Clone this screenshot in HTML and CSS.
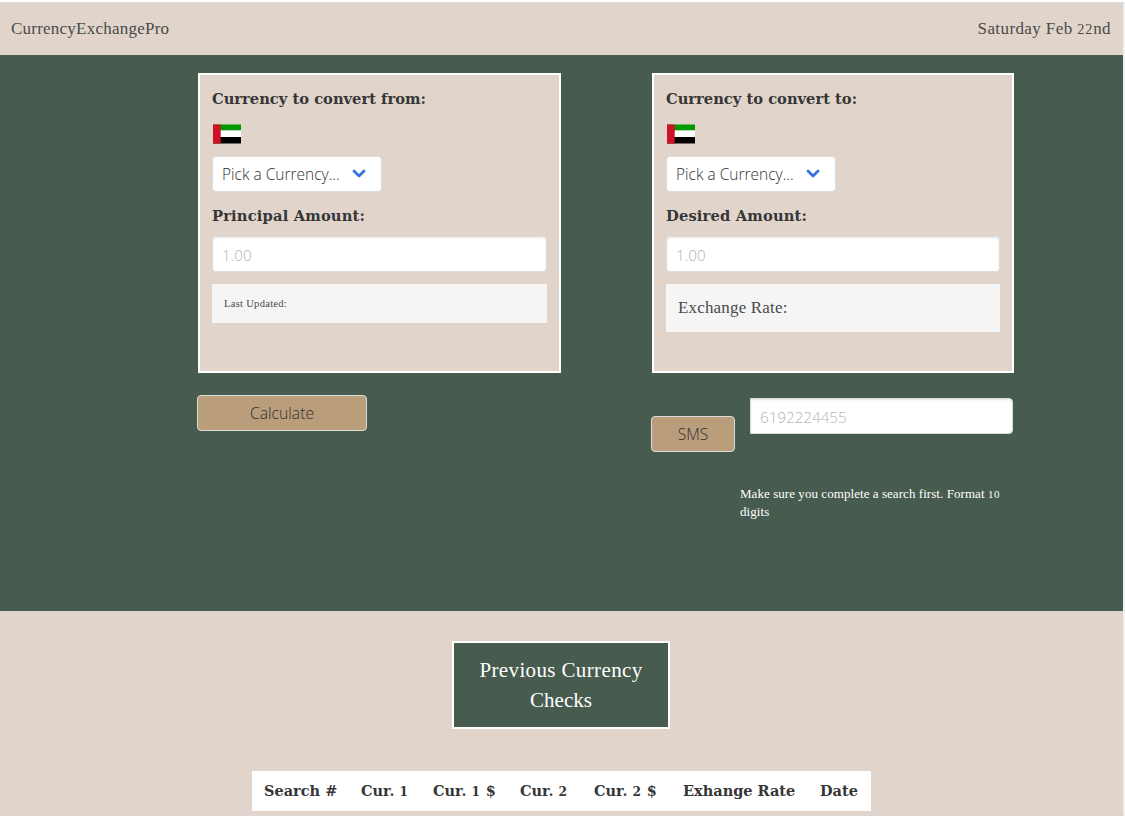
FILE: index.html
```html
<!DOCTYPE html>
<html lang="en">
<head>
<meta charset="utf-8">
<title>CurrencyExchangePro</title>
<link rel="stylesheet" href="styles.css">
</head>
<body>
<div class="page">
<header class="navbar"><span class="brand">CurrencyExchangePro</span><span class="today">Saturday Feb <span class="onum">22</span>nd</span></header>
<main class="converter">
  <section class="column">
    <div class="panel">
      <h2 class="label"><span class="from">Currency to convert from:</span></h2>
      <svg class="flag" viewBox="0 0 28 20"><path fill="#009a00" d="M0 .5h28v6H0z"/><path fill="#fff" d="M0 6.5h28v6.5H0z"/><path fill="#000" d="M0 13h28v6.5H0z"/><path fill="#cf1126" d="M0 .5h7.7v19H0z"/></svg>
      <div class="select"><span>Pick a Currency...</span><svg viewBox="0 0 14 10"><path d="M2 2l5 5 5-5"/></svg></div>
      <h2 class="label second"><span class="principal">Principal Amount:</span></h2>
      <input class="input" placeholder="1.00">
      <div class="result small"><span>Last Updated:</span></div>
    </div>
    <button class="button calculate">Calculate</button>
  </section>
  <section class="column">
    <div class="panel">
      <h2 class="label"><span class="to">Currency to convert to:</span></h2>
      <svg class="flag" viewBox="0 0 28 20"><path fill="#009a00" d="M0 .5h28v6H0z"/><path fill="#fff" d="M0 6.5h28v6.5H0z"/><path fill="#000" d="M0 13h28v6.5H0z"/><path fill="#cf1126" d="M0 .5h7.7v19H0z"/></svg>
      <div class="select"><span>Pick a Currency...</span><svg viewBox="0 0 14 10"><path d="M2 2l5 5 5-5"/></svg></div>
      <h2 class="label second"><span class="desired">Desired Amount:</span></h2>
      <input class="input" placeholder="1.00">
      <div class="result"><span>Exchange Rate:</span></div>
    </div>
    <div class="sms-row">
      <button class="button sms">SMS</button>
      <input class="input phone" placeholder="6192224455">
    </div>
    <p class="note"><span>Make sure you complete a search first. Format <span class="onum">10</span></span><br><span class="digits">digits</span></p>
  </section>
</main>
<section class="history">
  <h1 class="title"><span class="wide">Previous Currency</span><br><span>Checks</span></h1>
  <table class="checks">
    <tr><th class="c1">Search #</th><th class="c2">Cur. <span class="onum">1</span></th><th class="c3">Cur. <span class="onum">1</span> $</th><th class="c4">Cur. <span class="onum">2</span></th><th class="c5">Cur. <span class="onum">2</span> $</th><th class="c6">Exhange Rate</th><th class="c7">Date</th></tr>
  </table>
</section>
</div>
</body>
</html>
```
FILE: styles.css
```css
* { box-sizing: border-box; }
body { margin: 0; height: 818px; overflow: hidden; background: #fff; padding-top: 2px; color: #4a4a4a; font: 17px/24px "Liberation Serif", serif; }
.page { height: 814px; border-top: 1px solid #dcdcdc; border-bottom: 1px solid #dbd7d6; border-right: 2px solid #f1f1f1; background: #e1d5cb; }
.navbar { height: 52px; padding: 0 12px 0 11px; display: flex; justify-content: space-between; align-items: center; }
.brand { letter-spacing: .23px; }
.today { letter-spacing: .4px; }
.onum { font-size: .84em; line-height: 1; letter-spacing: .06em; }
.converter { height: 556px; background: #475b4f; padding: 18px 0 0 198px; display: grid; grid-template-columns: 363px 362px; column-gap: 91px; align-content: start; }
.panel { height: 300px; border: 2px solid #fff; background: #e1d5cb; padding: 12px; display: flex; flex-direction: column; align-items: flex-start; }
.label { margin: 0; height: 24px; font: bold 14.7px/23px "DejaVu Serif", serif; color: #363636; white-space: nowrap; }
.principal, .desired { letter-spacing: .16px; }
.second { margin: 12px 0 8px; }
.flag { width: 28px; height: 20px; margin: 13px 0 12px 1px; }
.select { width: 170px; height: 36px; background: #fff; border: 1px solid #dbdbdb; border-radius: 4px; display: flex; align-items: center; justify-content: space-between; padding: 0 15px 0 9px; font: 300 15.5px "Open Sans", sans-serif; color: #303030; }
.select svg { width: 14px; height: 10px; fill: none; stroke: #3273dc; stroke-width: 2.8; stroke-linecap: round; stroke-linejoin: round; }
.input { display: block; width: 100%; height: 36px; border: 1px solid #dbdbdb; border-radius: 4px; box-shadow: inset 0 1px 2px rgba(10,10,10,.1); padding: 2px 9px 0; font: 300 15.2px "Open Sans", sans-serif; background: #fff; }
.input::placeholder { color: #b4b4b4; opacity: 1; }
.result { width: 100%; height: 48px; margin-top: 12px; padding: 12px; background: #f5f5f5; letter-spacing: .17px; }
.small { height: 39px; font-size: 10.5px; line-height: 15px; letter-spacing: .3px; }
.button { height: 36px; padding: 0; border: 1px solid #dbdbdb; border-radius: 4px; background: #ba9d7b; color: #303030; font: 300 15.7px "Open Sans", sans-serif; }
.calculate { width: 170px; margin: 22px 0 0 -1px; }
.sms-row { display: flex; align-items: flex-start; margin: 25px 0 0 -1px; }
.sms { width: 84px; margin: 18px 15px 0 0; }
.phone { width: 263px; border-radius: 0 4px 4px 0; }
.note { margin: 33px 0 0 88px; color: #fff; font-size: 13px; line-height: 18px; white-space: nowrap; letter-spacing: .06px; }
.history { height: 204px; padding: 30px 0 0; overflow: hidden; }
.title { width: 218px; height: 88px; margin: 0 0 0 452px; padding: 12px 0; border: 2px solid #fff; background: #475b4f; color: #fff; text-align: center; font-size: 21px; line-height: 30px; font-weight: normal; }
.wide { letter-spacing: .37px; }
.checks { width: 619px; height: 40px; margin: 42px 0 0 252px; background: #fff; border-collapse: collapse; table-layout: fixed; color: #363636; }
.checks th { padding: 0 0 0 12px; text-align: left; white-space: nowrap; font: bold 14.5px/24px "DejaVu Serif", serif; }
.c1 { width: 97px; }
.c2 { width: 72px; }
.c3 { width: 87px; }
.c4 { width: 74px; }
.c5 { width: 89px; }
.c6 { width: 137px; }
.c7 { width: 63px; }
```
